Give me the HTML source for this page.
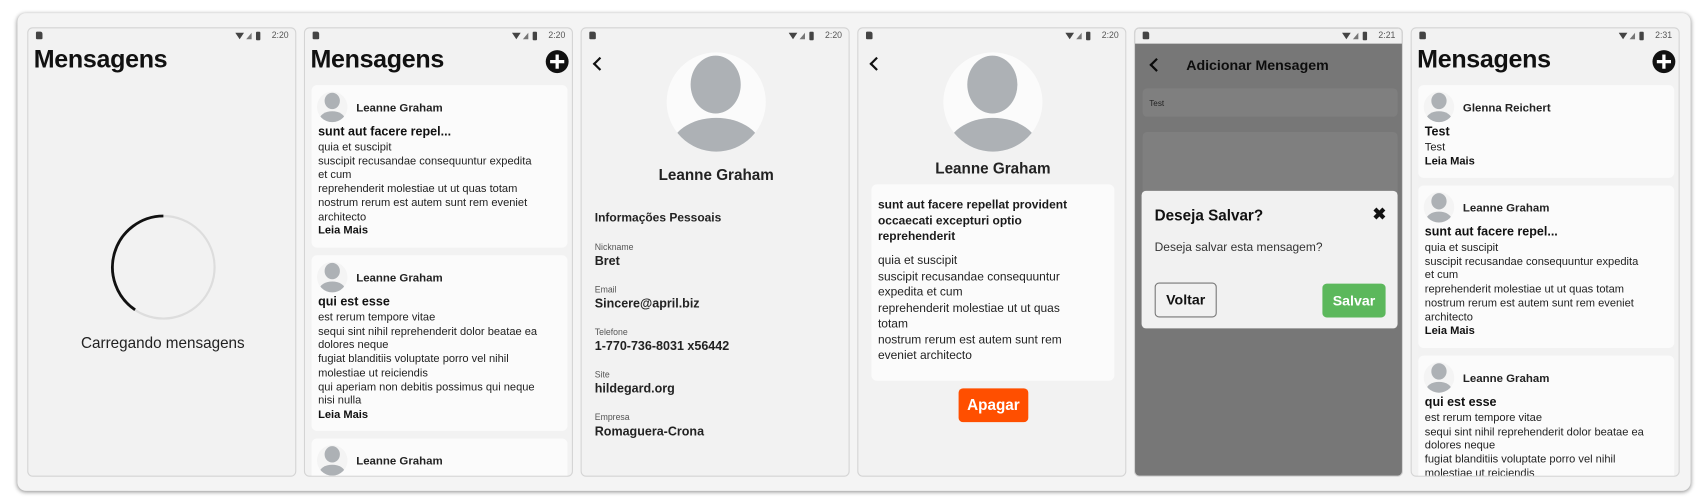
<!DOCTYPE html>
<html><head><meta charset="utf-8"><style>
*{margin:0;padding:0;box-sizing:border-box}
body{width:1708px;height:504px;background:#fff;overflow:hidden;font-family:"Liberation Sans",sans-serif;color:#111}
#w{position:absolute;left:0;top:0;width:1568px;height:462px;transform:scale(1.0893,1.0909);transform-origin:0 0}
.outer{position:absolute;left:16px;top:12px;width:1536px;height:438px;background:#f4f4f4;border-radius:8px;box-shadow:0 1px 4px rgba(0,0,0,.45)}
.s{position:absolute;top:25px;width:247px;height:412px;background:#f2f2f2;border:1px solid #d4d4d4;border-radius:5px;overflow:hidden}
.a{position:absolute}
.sb{position:absolute;left:0;top:0;width:100%;height:14px;font-size:8px;color:#555}
.sd{position:absolute;left:7px;top:3px;width:6px;height:7px;background:#444;border-radius:1px 2px 1px 1px}
.tm{position:absolute;right:6px;top:2px}
.ic{position:absolute;right:27px;top:3px;width:28px;height:8px}
.title{position:absolute;left:5px;top:15px;font-size:23px;font-weight:bold;letter-spacing:-.3px}
.plus{position:absolute;left:221px;top:20px;width:21px;height:21px;border-radius:50%;background:#111}
.plus:before,.plus:after{content:"";position:absolute;background:#fff;left:4px;top:9px;width:13px;height:3px}
.plus:after{left:9px;top:4px;width:3px;height:13px}
.card{position:absolute;left:6px;width:235px;background:#fbfbfb;border-radius:5px;padding:0 8px}
.av{position:absolute;left:5px;top:6px;width:28px;height:28px;border-radius:50%;overflow:hidden;background:#f4f4f4}
.av:before{content:"";position:absolute;left:7px;top:1px;width:14px;height:15px;border-radius:50%;background:#adb1b5}
.av:after{content:"";position:absolute;left:2px;top:18px;width:24px;height:16px;border-radius:50%;background:#adb1b5}
.nm{position:absolute;left:41px;top:15px;font-size:10.5px;font-weight:bold;color:#222}
.ct{position:absolute;left:6px;top:37px;font-size:11.5px;font-weight:bold}
.bd{position:absolute;left:6px;top:52px;font-size:10.2px;line-height:12.7px;color:#222;white-space:nowrap}
.bd b{font-weight:bold;color:#111}
.big{position:absolute;left:78px;top:22px;width:91px;height:91px;border-radius:50%;background:#fbfbfb;overflow:hidden}
.big:before{content:"";position:absolute;left:22px;top:3px;width:46px;height:53px;border-radius:50%;background:#adb1b5}
.big:after{content:"";position:absolute;left:3px;top:60px;width:85px;height:60px;border-radius:50%;background:#adb1b5}
.chev{position:absolute;left:12px;top:28px;width:9px;height:9px;border-left:2.6px solid #111;border-bottom:2.6px solid #111;transform:rotate(45deg)}
.lb{position:absolute;left:12px;font-size:8px;color:#555}
.vl{position:absolute;left:12px;font-size:11.5px;color:#222;font-weight:bold}
</style></head><body><div id="w">
<div class="outer"></div>

<div class="s" style="left:25px">
<div class="sb"><div class="sd"></div><svg class="ic" viewBox="0 0 28 8"><path d="M0 1h8L4 7z" fill="#444"/><path d="M10 7L15 1V7z" fill="#777"/><rect x="19" y="0" width="4" height="8" rx="1" fill="#444"/></svg><span class="tm">2:20</span></div>
<div class="title">Mensagens</div>
<svg class="a" style="left:74px;top:169px" width="100" height="100" viewBox="0 0 100 100"><circle cx="50" cy="50" r="47" fill="none" stroke="#ddd" stroke-width="2"/><path d="M50 3A47 47 0 0 0 24 89" fill="none" stroke="#111" stroke-width="2.6"/></svg>
<div class="a" style="left:0;width:247px;top:280px;text-align:center;font-size:14px;color:#222">Carregando mensagens</div>
</div>

<div class="s" style="left:279px">
<div class="sb"><div class="sd"></div><svg class="ic" viewBox="0 0 28 8"><path d="M0 1h8L4 7z" fill="#444"/><path d="M10 7L15 1V7z" fill="#777"/><rect x="19" y="0" width="4" height="8" rx="1" fill="#444"/></svg><span class="tm">2:20</span></div>
<div class="title">Mensagens</div><div class="plus"></div>
<div class="card" style="top:52px;height:149px"><div class="av"></div><div class="nm">Leanne Graham</div><div class="ct">sunt aut facere repel...</div>
<div class="bd">quia et suscipit<br>suscipit recusandae consequuntur expedita<br>et cum<br>reprehenderit molestiae ut ut quas totam<br>nostrum rerum est autem sunt rem eveniet<br>architecto<br><b>Leia Mais</b></div></div>
<div class="card" style="top:208px;height:161px"><div class="av"></div><div class="nm">Leanne Graham</div><div class="ct">qui est esse</div>
<div class="bd">est rerum tempore vitae<br>sequi sint nihil reprehenderit dolor beatae ea<br>dolores neque<br>fugiat blanditiis voluptate porro vel nihil<br>molestiae ut reiciendis<br>qui aperiam non debitis possimus qui neque<br>nisi nulla<br><b>Leia Mais</b></div></div>
<div class="card" style="top:376px;height:60px"><div class="av"></div><div class="nm">Leanne Graham</div></div>
</div>

<div class="s" style="left:533px">
<div class="sb"><div class="sd"></div><svg class="ic" viewBox="0 0 28 8"><path d="M0 1h8L4 7z" fill="#444"/><path d="M10 7L15 1V7z" fill="#777"/><rect x="19" y="0" width="4" height="8" rx="1" fill="#444"/></svg><span class="tm">2:20</span></div>
<div class="chev"></div><div class="big"></div>
<div class="a" style="left:0;width:247px;top:126px;text-align:center;font-size:14px;font-weight:bold;color:#222">Leanne Graham</div>
<div class="a" style="left:12px;top:168px;font-size:11px;font-weight:bold;color:#222">Informações Pessoais</div>
<div class="lb" style="top:196px">Nickname</div><div class="vl" style="top:208px">Bret</div>
<div class="lb" style="top:235px">Email</div><div class="vl" style="top:247px">Sincere@april.biz</div>
<div class="lb" style="top:274px">Telefone</div><div class="vl" style="top:286px">1-770-736-8031 x56442</div>
<div class="lb" style="top:313px">Site</div><div class="vl" style="top:325px">hildegard.org</div>
<div class="lb" style="top:352px">Empresa</div><div class="vl" style="top:364px">Romaguera-Crona</div>
</div>

<div class="s" style="left:787px">
<div class="sb"><div class="sd"></div><svg class="ic" viewBox="0 0 28 8"><path d="M0 1h8L4 7z" fill="#444"/><path d="M10 7L15 1V7z" fill="#777"/><rect x="19" y="0" width="4" height="8" rx="1" fill="#444"/></svg><span class="tm">2:20</span></div>
<div class="chev"></div><div class="big"></div>
<div class="a" style="left:0;width:247px;top:120px;text-align:center;font-size:14px;font-weight:bold;color:#222">Leanne Graham</div>
<div class="a" style="left:12px;top:143px;width:223px;height:180px;background:#fbfbfb;border-radius:5px"></div>
<div class="a" style="left:18px;top:155px;font-size:11px;line-height:14.5px;font-weight:bold;white-space:nowrap;color:#1a1a1a">sunt aut facere repellat provident<br>occaecati excepturi optio<br>reprehenderit</div>
<div class="a" style="left:18px;top:206px;font-size:11px;line-height:14.5px;white-space:nowrap;color:#222">quia et suscipit<br>suscipit recusandae consequuntur<br>expedita et cum<br>reprehenderit molestiae ut ut quas<br>totam<br>nostrum rerum est autem sunt rem<br>eveniet architecto</div>
<div class="a" style="left:92px;top:330px;width:64px;height:31px;background:#ff4f00;border-radius:4px;color:#fff;font-weight:bold;font-size:14px;text-align:center;line-height:31px">Apagar</div>
</div>

<div class="s" style="left:1041px;background:#777">
<div class="sb" style="background:#f0f0f0"><div class="sd"></div><svg class="ic" viewBox="0 0 28 8"><path d="M0 1h8L4 7z" fill="#444"/><path d="M10 7L15 1V7z" fill="#777"/><rect x="19" y="0" width="4" height="8" rx="1" fill="#444"/></svg><span class="tm">2:21</span></div>
<div class="chev" style="left:15px;top:29px;border-color:#0a0a0a"></div>
<div class="a" style="left:47px;top:26px;font-size:13px;font-weight:bold;color:#0d0d0d">Adicionar Mensagem</div>
<div class="a" style="left:7px;top:55px;width:234px;height:26px;background:#7f7f7f;border-radius:4px"></div>
<div class="a" style="left:13px;top:64px;font-size:7.5px;color:#222">Test</div>
<div class="a" style="left:7px;top:95px;width:234px;height:90px;background:#7f7f7f;border-radius:4px"></div>
<div class="a" style="left:6px;top:149px;width:235px;height:126px;background:#f1f1f1;border-radius:4px"></div>
<div class="a" style="left:18px;top:163px;font-size:14px;font-weight:bold;color:#111">Deseja Salvar?</div>
<div class="a" style="left:218px;top:161px;font-size:15px;font-weight:bold;color:#111">✖</div>
<div class="a" style="left:18px;top:195px;font-size:11px;color:#333">Deseja salvar esta mensagem?</div>
<div class="a" style="left:18px;top:233px;width:57px;height:32px;border:1px solid #777;border-radius:4px;font-size:13px;font-weight:bold;text-align:center;line-height:30px;color:#111">Voltar</div>
<div class="a" style="left:172px;top:234px;width:58px;height:31px;background:#5cb85c;border-radius:4px;font-size:13px;font-weight:bold;text-align:center;line-height:31px;color:#fff">Salvar</div>
</div>

<div class="s" style="left:1295px">
<div class="sb"><div class="sd"></div><svg class="ic" viewBox="0 0 28 8"><path d="M0 1h8L4 7z" fill="#444"/><path d="M10 7L15 1V7z" fill="#777"/><rect x="19" y="0" width="4" height="8" rx="1" fill="#444"/></svg><span class="tm">2:31</span></div>
<div class="title">Mensagens</div><div class="plus"></div>
<div class="card" style="top:52px;height:85px"><div class="av"></div><div class="nm">Glenna Reichert</div><div class="ct">Test</div>
<div class="bd">Test<br><b>Leia Mais</b></div></div>
<div class="card" style="top:144px;height:149px"><div class="av"></div><div class="nm">Leanne Graham</div><div class="ct">sunt aut facere repel...</div>
<div class="bd">quia et suscipit<br>suscipit recusandae consequuntur expedita<br>et cum<br>reprehenderit molestiae ut ut quas totam<br>nostrum rerum est autem sunt rem eveniet<br>architecto<br><b>Leia Mais</b></div></div>
<div class="card" style="top:300px;height:120px"><div class="av"></div><div class="nm">Leanne Graham</div><div class="ct">qui est esse</div>
<div class="bd">est rerum tempore vitae<br>sequi sint nihil reprehenderit dolor beatae ea<br>dolores neque<br>fugiat blanditiis voluptate porro vel nihil<br>molestiae ut reiciendis</div></div>
</div>
</div></body></html>
